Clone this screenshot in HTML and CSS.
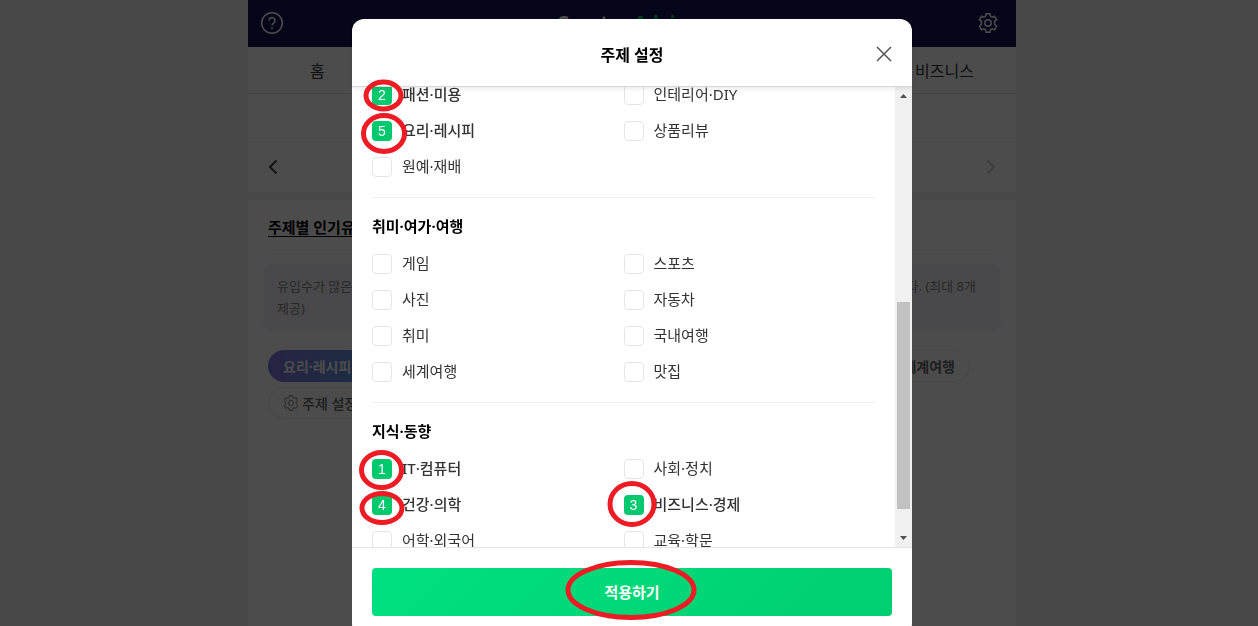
FILE: index.html
```html
<!DOCTYPE html>
<html lang="ko">
<head>
    <meta charset="UTF-8">
    <meta name="viewport" content="width=device-width, initial-scale=1.0">
    <title>Creator Advisor</title>
    <link rel="stylesheet" href="styles.css">
</head>
<body>
    <svg class="symbols" aria-hidden="true">
        <symbol id="gear" viewBox="0 0 20 20">
            <path d="M8 .8h4l.5 2.5 1.6.9 2.4-.9 2 3.5-1.9 1.6v2.9l1.900 1.900-2 3.500-2.400-.9-1.600.9-.5 2.500H8l-.5-2.500-1.600-.9-2.400.9-2-3.500 1.900-1.900V8.400L1.500 6.800l2-3.500 2.400.9 1.600-.9z"/>
            <circle cx="10" cy="10" r="3.200"/>
        </symbol>
    </svg>

    <div class="page">
        <header class="top">
            <button class="icon-button" aria-label="도움말">
                <svg width="24" height="24" viewBox="0 0 24 24"><circle cx="12" cy="12" r="10.300"/><path d="M9 9.600a3 3 0 1 1 4.600 2.500c-1 .7-1.600 1.200-1.600 2.500M12 16.300v1.700"/></svg>
            </button>
            <div class="logo">Creator <span>Advisor</span></div>
            <button class="icon-button" aria-label="설정">
                <svg width="20" height="20"><use href="#gear"/></svg>
            </button>
        </header>
        <nav class="tabs">
            <a href="#">홈</a>
            <a href="#">유입분석</a>
            <a href="#">트렌드</a>
            <a href="#">리워드</a>
            <a href="#">비즈니스</a>
        </nav>
        <div class="filter"></div>
        <div class="dates">
            <button class="arrow" aria-label="이전"><svg width="10" height="16" viewBox="0 0 10 16"><path d="M8.500 1.500L2 8l6.500 6.500"/></svg></button>
            <button class="arrow next" aria-label="다음" disabled><svg width="10" height="16" viewBox="0 0 10 16"><path d="M1.500 1.500L8 8l-6.500 6.500"/></svg></button>
        </div>
        <main class="trend">
            <h2><a href="#">주제별 인기유입검색어</a></h2>
            <div class="tip">
                <p>유입수가 많은</p>
                <p class="tip-end">니다. (최대 8개</p>
                <p>제공)</p>
            </div>
            <div class="chips">
                <button class="chip active">요리·레시피</button>
                <button class="chip">패션·미용</button>
                <button class="chip">IT·컴퓨터</button>
                <button class="chip">건강·의학</button>
                <button class="chip">세계여행</button>
            </div>
            <div class="chips">
                <button class="chip setting"><svg width="16" height="16"><use href="#gear"/></svg>주제 설정</button>
            </div>
        </main>
    </div>

    <div class="dim">
        <div class="modal" role="dialog" aria-labelledby="modalTitle">
            <div class="modal-header">
                <h1 id="modalTitle">주제 설정</h1>
                <button class="close" aria-label="닫기"><svg width="16" height="16" viewBox="0 0 16 16"><path d="M1 1l14 14M15 1L1 15"/></svg></button>
            </div>
            <div class="modal-body">
                <div class="topics">
                    <section class="group">
                        <div class="rows">
                            <label class="topic"><span class="check"><input type="checkbox" checked><span>2</span></span><b>패션·미용</b></label>
                            <label class="topic"><span class="check"><input type="checkbox"></span><em>인테리어·DIY</em></label>
                            <label class="topic"><span class="check"><input type="checkbox" checked><span>5</span></span><b>요리·레시피</b></label>
                            <label class="topic"><span class="check"><input type="checkbox"></span><em>상품리뷰</em></label>
                            <label class="topic"><span class="check"><input type="checkbox"></span><em>원예·재배</em></label>
                        </div>
                    </section>
                    <section class="group">
                        <h3>취미·여가·여행</h3>
                        <div class="rows">
                            <label class="topic"><span class="check"><input type="checkbox"></span><em>게임</em></label>
                            <label class="topic"><span class="check"><input type="checkbox"></span><em>스포츠</em></label>
                            <label class="topic"><span class="check"><input type="checkbox"></span><em>사진</em></label>
                            <label class="topic"><span class="check"><input type="checkbox"></span><em>자동차</em></label>
                            <label class="topic"><span class="check"><input type="checkbox"></span><em>취미</em></label>
                            <label class="topic"><span class="check"><input type="checkbox"></span><em>국내여행</em></label>
                            <label class="topic"><span class="check"><input type="checkbox"></span><em>세계여행</em></label>
                            <label class="topic"><span class="check"><input type="checkbox"></span><em>맛집</em></label>
                        </div>
                    </section>
                    <section class="group">
                        <h3>지식·동향</h3>
                        <div class="rows">
                            <label class="topic"><span class="check"><input type="checkbox" checked><span>1</span></span><b>IT·컴퓨터</b></label>
                            <label class="topic"><span class="check"><input type="checkbox"></span><em>사회·정치</em></label>
                            <label class="topic"><span class="check"><input type="checkbox" checked><span>4</span></span><b>건강·의학</b></label>
                            <label class="topic"><span class="check"><input type="checkbox" checked><span>3</span></span><b>비즈니스·경제</b></label>
                            <label class="topic"><span class="check"><input type="checkbox"></span><em>어학·외국어</em></label>
                            <label class="topic"><span class="check"><input type="checkbox"></span><em>교육·학문</em></label>
                        </div>
                    </section>
                </div>
                <div class="scrollbar">
                    <svg width="7" height="4" viewBox="0 0 7 4"><path d="M0 4l3.500-4L7 4z"/></svg>
                    <div class="track"><div class="thumb"></div></div>
                    <svg width="7" height="4" viewBox="0 0 7 4"><path d="M0 0l3.500 4L7 0z"/></svg>
                </div>
            </div>
            <div class="modal-footer">
                <button class="apply">적용하기</button>
            </div>
            <!-- hand-drawn marks over the chosen topics -->
            <svg class="marks" aria-hidden="true">
                <ellipse cx="31.500" cy="76.500" rx="17.500" ry="13.500"/>
                <ellipse cx="32" cy="114.500" rx="20.500" ry="18"/>
                <ellipse cx="29.500" cy="451" rx="20" ry="17.500"/>
                <ellipse cx="30" cy="489" rx="20" ry="14.500"/>
                <ellipse cx="280" cy="485" rx="22" ry="20.500"/>
                <ellipse cx="279" cy="571" rx="63" ry="27.500"/>
            </svg>
        </div>
    </div>
</body>
</html>
```
FILE: styles.css
```css
* {
    box-sizing: border-box;
}
body {
    margin: 0;
    height: 100vh;
    overflow: hidden;
    padding-left: 6px;
    background-color: #f0f0f0;
    color: #333;
    font-family: "Noto Sans", "Noto Sans CJK KR", sans-serif;
    font-size: 15px;
}
h1, h2, h3, p {
    margin: 0;
}
button {
    padding: 0;
    border: none;
    background: none;
    font-family: inherit;
    cursor: pointer;
}
svg {
    display: block;
    fill: none;
    stroke: currentColor;
}
.symbols {
    position: absolute;
    width: 0;
    height: 0;
}
.page {
    max-width: 768px;
    min-height: 100vh;
    margin: 0 auto;
    background-color: #fff;
}
.top {
    display: flex;
    justify-content: space-between;
    align-items: center;
    height: 47px;
    padding: 0 18px 2px 12px;
    background-color: #14145a;
}
.icon-button {
    color: #fff;
    stroke-width: 1.5;
}
.logo {
    color: #fff;
    font: bold 19px "Open Sans", sans-serif;
}
.logo span {
    color: #03c75a;
}
.tabs {
    display: flex;
    justify-content: space-between;
    align-items: center;
    height: 47px;
    padding: 0 42px 0 62px;
    border-bottom: 1px solid #e0e0e0;
}
.tabs a {
    color: #333;
    font-size: 16px;
    text-decoration: none;
}
.filter {
    height: 48px;
    border-bottom: 1px solid #f4f4f4;
}
.dates {
    display: flex;
    justify-content: space-between;
    align-items: center;
    height: 50px;
    padding: 0 20px;
}
.arrow {
    color: #444;
    stroke-width: 2;
}
.arrow.next {
    color: #ccc;
}
.trend {
    padding: 11px 15px;
    border-top: 8px solid #f0f0f0;
}
.trend h2 {
    margin: 0 5px 10px;
    padding-bottom: 10px;
    border-bottom: 1px solid #f4f4f4;
    font-size: 15px;
    line-height: 32px;
}
.trend h2 a {
    color: #000;
    text-underline-offset: 3px;
}
.tip {
    display: grid;
    grid-template-columns: auto auto;
    justify-content: space-between;
    margin-bottom: 20px;
    padding: 11px 25px 11px 14px;
    border-radius: 8px;
    background-color: #f5f6fa;
    color: #888;
    font-size: 13px;
    line-height: 22px;
}
.chips {
    display: flex;
    justify-content: space-between;
    margin-bottom: 5px;
    padding: 0 31px 0 5px;
}
.chip {
    display: flex;
    align-items: center;
    gap: 3px;
    height: 32px;
    padding: 0 14px;
    border: 1px solid #eee;
    border-radius: 16px;
    color: #666;
    font-size: 14px;
    font-weight: 700;
}
.chip.active {
    border-color: transparent;
    background: linear-gradient(90deg, #807ae0, #6496e0) border-box;
    color: #fff;
}
.chip.setting {
    font-weight: 500;
}
.dim {
    position: fixed;
    inset: 0;
    padding: 19px 0 0 6px;
    background-color: rgba(0, 0, 0, 0.7);
}
.modal {
    position: relative;
    max-width: 560px;
    margin: 0 auto;
    border-radius: 12px;
    background-color: #fff;
}
.modal-header {
    position: relative;
    z-index: 1;
    display: grid;
    grid-template-columns: 1fr auto 1fr;
    align-items: center;
    height: 68px;
    padding: 3px 20px 0;
    border-bottom: 1px solid #d8d8d8;
    box-shadow: 0 2px 4px rgba(0, 0, 0, 0.08);
}
.modal-header h1 {
    grid-column: 2;
    color: #000;
    font-size: 16px;
}
.close {
    justify-self: end;
    color: #555;
    stroke-width: 1.5;
}
.modal-body {
    display: flex;
    height: calc(100vh - 166px);
    overflow: hidden;
}
.topics {
    flex: 1;
    margin-top: -2px;
    padding: 0 20px;
}
.group + .group {
    margin-top: 20px;
    padding-top: 16px;
    border-top: 1px solid #f0f0f0;
}
.group h3 {
    margin-bottom: 16px;
    color: #000;
    font-size: 15px;
    line-height: 24px;
}
.rows {
    display: grid;
    grid-template-columns: 1fr 1fr;
    row-gap: 16px;
}
.topic {
    display: flex;
    align-items: center;
    gap: 10px;
    height: 20px;
}
.topic b, .topic em {
    padding-bottom: 2px;
    font-style: normal;
    font-weight: 400;
    line-height: 20px;
}
.topic b {
    font-weight: 500;
}
.check {
    display: grid;
    place-items: center;
}
.check input, .check span {
    grid-area: 1 / 1;
}
.check input {
    width: 20px;
    height: 20px;
    margin: 0;
    appearance: none;
    border: 1px solid #e5e5e5;
    border-radius: 4px;
    background-color: #fff;
}
.check input:checked {
    border: none;
    background-color: #03c96e;
}
.check span {
    z-index: 1;
    color: #fff;
    font: 14px "Liberation Sans", sans-serif;
}
.scrollbar {
    display: flex;
    flex-direction: column;
    align-items: center;
    width: 17px;
    padding: 7px 0;
    background-color: #f0f0f0;
}
.scrollbar svg {
    fill: #505050;
    stroke: none;
}
.track {
    display: flex;
    flex: 1;
    align-items: flex-end;
    margin: 6px 0 27px;
}
.thumb {
    width: 13px;
    height: 51%;
    background-color: #c1c1c1;
}
.modal-footer {
    padding: 20px;
    border-top: 1px solid #e5e5e5;
}
.apply {
    width: 100%;
    height: 48px;
    padding-bottom: 2px;
    border-radius: 4px;
    background: linear-gradient(135deg, #00e080, #00cf70);
    color: #fff;
    font-size: 15px;
    font-weight: 700;
}
.marks {
    position: absolute;
    z-index: 2;
    inset: 0;
    width: 100%;
    height: 100%;
    overflow: visible;
    pointer-events: none;
    stroke: #ed1c24;
    stroke-width: 5;
}
```
